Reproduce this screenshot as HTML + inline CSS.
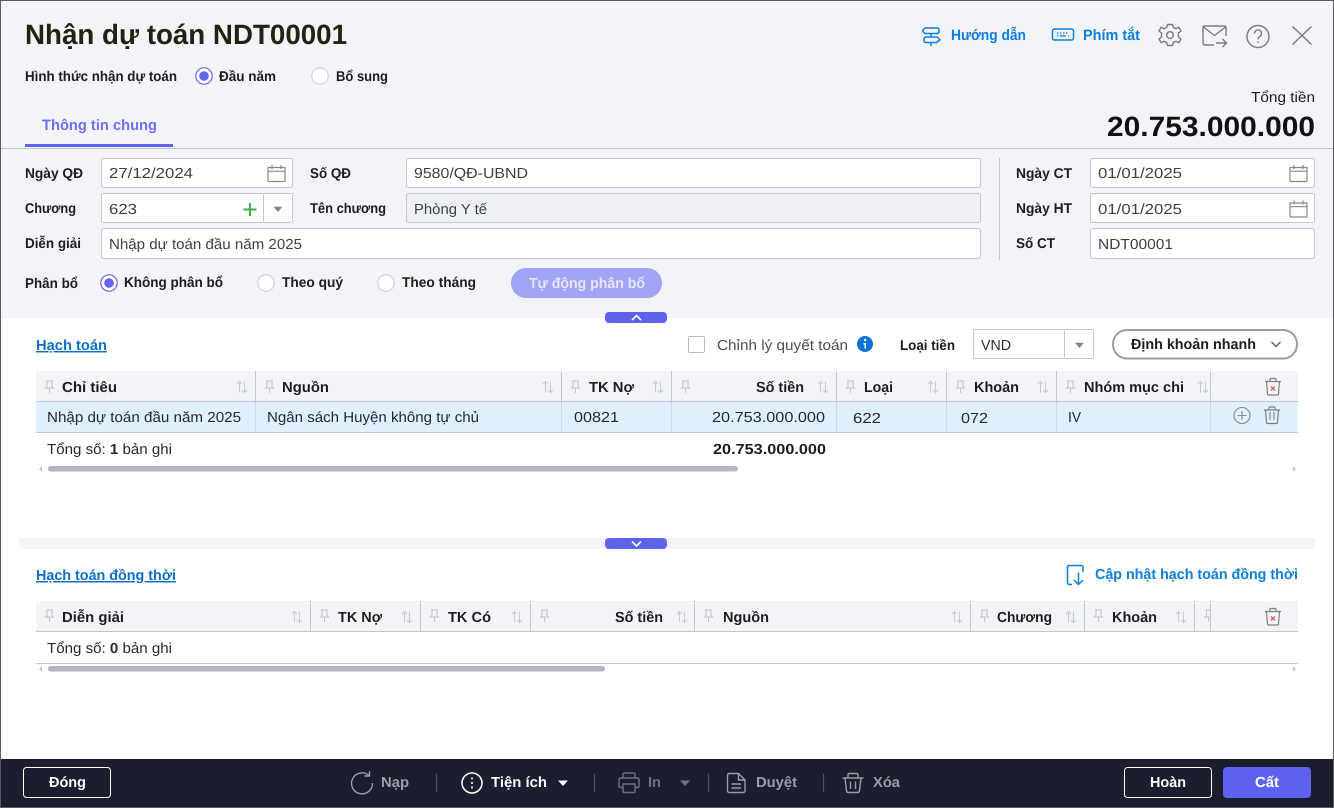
<!DOCTYPE html>
<html lang="vi"><head><meta charset="utf-8"><title>Nhận dự toán NDT00001</title>
<style>
html,body{margin:0;padding:0;background:#fff;width:1334px;height:808px;overflow:hidden}
svg{display:block}
text{font-family:"Liberation Sans",sans-serif;font-size:14.6px;fill:#26282e}
.b{font-weight:700;fill:#1c1d22}
.lb{font-size:14.2px}
.v{fill:#3c3f47}
.inp{fill:#fff;stroke:#c5c7d0}
.ln{stroke:#c4c6cf;fill:none}
.ic{fill:none;stroke:#7a7c80;stroke-width:1.4}
.blue{fill:none;stroke:#0d7fdc;stroke-width:1.5}
.ft{fill:none;stroke:#9a9da6;stroke-width:1.4}
.gr{fill:#9a9da6;font-weight:700}
</style></head><body>
<svg width="1334" height="808" viewBox="0 0 1334 808" xmlns="http://www.w3.org/2000/svg" text-rendering="geometricPrecision">
<defs>
<g id="pin"><path d="M-3.500-6H3.500M-2.500-6V-.5L-4 1H4L2.500-.5V-6M0 1V6" fill="none" stroke="#c3c5cc" stroke-width="1"/></g>
<g id="sort"><path d="M-2.500 5.500V-5.500M-5-3L-2.500-5.500L0-3M2.500-5.500V5.500M0 3L2.500 5.500L5 3" fill="none" stroke="#c8cad1" stroke-width="1"/></g>
<g id="cal"><path d="M-8.500-5.500H8.500V7.500Q8.500 8.500 7.500 8.500H-7.500Q-8.500 8.500-8.500 7.500ZM-8.500-1.800H8.500M-4.500-8V-4M4.500-8V-4" fill="none" stroke="#85878c" stroke-width="1.200"/></g>
<g id="rx"><circle r="8.200" fill="#fff" stroke="#c8cad2" stroke-width="1"/></g>
<g id="ron"><circle r="8.200" fill="#fff" stroke="#6466f1" stroke-width="1.200"/><circle r="4.800" fill="#6466f1"/></g>
<g id="trash"><path d="M-8-5.500H8M-3-5.500V-7.500Q-3-8.500-2-8.500H2Q3-8.500 3-7.500V-5.500M-6.500-5.500L-5.500 7Q-5.400 8-4.500 8H4.500Q5.400 8 5.500 7L6.500-5.500" fill="none" stroke="#7d7f86" stroke-width="1.200"/></g>
<g id="caret"><path d="M-4.500-2.200H4.500L0 3Z" fill="#82848b"/></g>
</defs>

<!-- background -->
<rect width="1334" height="808" fill="#fff"/>
<rect x="0" y="0" width="1334" height="318" fill="#f3f4f9"/>

<!-- title -->
<text x="25" y="44" class="b" style="font-size:28px;fill:#222210" textLength="322" lengthAdjust="spacingAndGlyphs">Nhận dự toán NDT00001</text>
<text x="25" y="81" class="b lb" textLength="152" lengthAdjust="spacingAndGlyphs">Hình thức nhận dự toán</text>
<use href="#ron" x="204" y="76"/>
<text x="219" y="81" class="b lb" textLength="57" lengthAdjust="spacingAndGlyphs">Đầu năm</text>
<use href="#rx" x="320" y="76"/>
<text x="336" y="81" class="b lb" textLength="52" lengthAdjust="spacingAndGlyphs">Bổ sung</text>

<!-- top right tools -->
<path class="blue" d="M931 27V28M931 33.500V37M931 42.500V46M925 28H937Q939 28 939 30V31.500Q939 33.500 937 33.500H925L922.500 30.700ZM926 37H937L940 39.700L937 42.500H926Q924 42.500 924 40.500V39Q924 37 926 37Z"/>
<text x="951" y="40" style="font-size:15px;fill:#0d7fdc;font-weight:700" textLength="75" lengthAdjust="spacingAndGlyphs">Hướng dẫn</text>
<rect x="1052.500" y="29" width="21" height="11" rx="2" class="blue"/>
<path d="M1057 33h1.500M1060 33h1.500M1063 33h1.500M1066 33h1.500M1057 36h1.500M1060 36h6M1068 36h1" stroke="#0d7fdc" stroke-width="1.200"/>
<text x="1083" y="40" style="font-size:15px;fill:#0d7fdc;font-weight:700" textLength="57" lengthAdjust="spacingAndGlyphs">Phím tắt</text>
<g transform="translate(1170 35)"><circle r="3.300" class="ic"/><path class="ic" stroke-linejoin="round" d="M-2.500-10.500H2.500L3.300-7.500L6-6.300L8.800-7.800L11-4L8.500-2V2L11 4L8.800 7.800L6 6.300L3.300 7.500L2.500 10.500H-2.500L-3.300 7.500L-6 6.300L-8.800 7.800L-11 4L-8.500 2V-2L-11-4L-8.800-7.800L-6-6.300L-3.300-7.500Z"/></g>
<path class="ic" d="M1214 45H1205Q1203 45 1203 43V27.500Q1203 26 1205 26H1224Q1226 26 1226 27.500V36M1203.500 27L1214.500 35.500L1225.500 27M1216 43H1226.500M1222.500 39L1226.500 43L1222.500 47"/>
<circle cx="1258" cy="36.500" r="11" class="ic"/>
<path class="ic" d="M1254.500 33.500A3.500 3.500 0 1 1 1260 36.300C1258.800 37.100 1258 37.800 1258 39.500M1258 41.300V42.800"/>
<path d="M1292.500 26.500L1311.500 44.500M1311.500 26.500L1292.500 44.500" fill="none" stroke="#7a7c80" stroke-width="1.500"/>

<!-- total -->
<text x="1251" y="102" style="font-size:14.500px;fill:#1c1d22" textLength="64" lengthAdjust="spacingAndGlyphs">Tổng tiền</text>
<text x="1107" y="136" class="b" style="font-size:28px;fill:#111" textLength="208" lengthAdjust="spacingAndGlyphs">20.753.000.000</text>

<!-- tab -->
<text x="42" y="130" style="font-size:15px;font-weight:700;fill:#6f70ef" textLength="115" lengthAdjust="spacingAndGlyphs">Thông tin chung</text>
<rect x="0" y="148" width="1334" height="1" fill="#c4c6cf"/>
<rect x="25" y="144" width="148" height="3" fill="#5f62ee"/>

<!-- form -->
<text x="25" y="178" class="b lb" textLength="58" lengthAdjust="spacingAndGlyphs">Ngày QĐ</text>
<rect x="101.500" y="158.500" width="191" height="29" rx="2" class="inp"/>
<text x="109" y="178" class="v" textLength="84" lengthAdjust="spacingAndGlyphs">27/12/2024</text>
<use href="#cal" x="276.500" y="173"/>

<text x="25" y="213" class="b lb" textLength="51" lengthAdjust="spacingAndGlyphs">Chương</text>
<rect x="101.500" y="193.500" width="191" height="29" rx="2" class="inp"/>
<text x="109" y="214" class="v" textLength="28" lengthAdjust="spacingAndGlyphs">623</text>
<path d="M250 203V216M243.500 209.500H256.500" stroke="#38b449" stroke-width="2" fill="none"/>
<path d="M263.500 194V222" stroke="#c5c7d0"/>
<use href="#caret" x="278" y="209"/>

<text x="25" y="248" class="b lb" textLength="56" lengthAdjust="spacingAndGlyphs">Diễn giải</text>
<rect x="101.500" y="228.500" width="879" height="30" rx="2" class="inp"/>
<text x="109" y="249" class="v" textLength="193" lengthAdjust="spacingAndGlyphs">Nhập dự toán đầu năm 2025</text>

<text x="310" y="178" class="b lb" textLength="41" lengthAdjust="spacingAndGlyphs">Số QĐ</text>
<rect x="406.500" y="158.500" width="574" height="29" rx="2" class="inp"/>
<text x="414" y="178" class="v" textLength="114" lengthAdjust="spacingAndGlyphs">9580/QĐ-UBND</text>
<text x="310" y="213" class="b lb" textLength="76" lengthAdjust="spacingAndGlyphs">Tên chương</text>
<rect x="406.500" y="193.500" width="574" height="29" rx="2" fill="#eff0f4" stroke="#c5c7d0"/>
<text x="414" y="214" class="v" textLength="73" lengthAdjust="spacingAndGlyphs">Phòng Y tế</text>

<path d="M999.500 158V260" stroke="#c4c6cf"/>

<text x="1016" y="178" class="b lb" textLength="56" lengthAdjust="spacingAndGlyphs">Ngày CT</text>
<rect x="1090.500" y="158.500" width="224" height="29" rx="2" class="inp"/>
<text x="1098" y="178" class="v" textLength="84" lengthAdjust="spacingAndGlyphs">01/01/2025</text>
<use href="#cal" x="1298.500" y="173"/>
<text x="1016" y="213" class="b lb" textLength="56" lengthAdjust="spacingAndGlyphs">Ngày HT</text>
<rect x="1090.500" y="193.500" width="224" height="29" rx="2" class="inp"/>
<text x="1098" y="214" class="v" textLength="84" lengthAdjust="spacingAndGlyphs">01/01/2025</text>
<use href="#cal" x="1298.500" y="208.500"/>
<text x="1016" y="248" class="b lb" textLength="39" lengthAdjust="spacingAndGlyphs">Số CT</text>
<rect x="1090.500" y="228.500" width="224" height="30" rx="2" class="inp"/>
<text x="1098" y="249" class="v" textLength="75" lengthAdjust="spacingAndGlyphs">NDT00001</text>

<text x="25" y="288" class="b lb" textLength="53" lengthAdjust="spacingAndGlyphs">Phân bổ</text>
<use href="#ron" x="109" y="283"/>
<text x="124" y="287" class="b lb" textLength="99" lengthAdjust="spacingAndGlyphs">Không phân bổ</text>
<use href="#rx" x="266" y="283"/>
<text x="282" y="287" class="b lb" textLength="61" lengthAdjust="spacingAndGlyphs">Theo quý</text>
<use href="#rx" x="386" y="283"/>
<text x="402" y="287" class="b lb" textLength="74" lengthAdjust="spacingAndGlyphs">Theo tháng</text>
<rect x="511" y="268" width="151" height="30" rx="15" fill="#a1a3f4"/>
<text x="529" y="288" style="font-size:14.600px;font-weight:700;fill:#e6e7fb" textLength="116" lengthAdjust="spacingAndGlyphs">Tự động phân bổ</text>

<!-- upper handle -->
<rect x="605" y="312" width="62" height="11" rx="4" fill="#5f62ea"/>
<path d="M632 320L636.500 315.500L641 320" fill="none" stroke="#fff" stroke-width="1.600"/>

<!-- toolbar 1 -->
<text x="36" y="350" style="font-size:14.600px;font-weight:700;fill:#0f6fc6;text-decoration:underline" textLength="71" lengthAdjust="spacingAndGlyphs">Hạch toán</text>
<rect x="688.500" y="336.500" width="16" height="16" rx="1.500" fill="#fff" stroke="#b8bbd0"/>
<text x="717" y="350" style="fill:#4a4d57" textLength="131" lengthAdjust="spacingAndGlyphs">Chỉnh lý quyết toán</text>
<circle cx="865" cy="344" r="8" fill="#0b74d1"/>
<path d="M864 341h2v-2h-2zM863.500 343H866V348.500H864.500V344.500H863.500Z" fill="#fff"/>
<text x="900" y="350" class="b lb" textLength="55" lengthAdjust="spacingAndGlyphs">Loại tiền</text>
<rect x="973.500" y="329.500" width="120" height="29" rx="2" class="inp"/>
<path d="M1064.500 330V358" stroke="#c5c7d0"/>
<text x="981" y="350" style="fill:#2b2d33" textLength="30" lengthAdjust="spacingAndGlyphs">VND</text>
<use href="#caret" x="1079.500" y="345"/>
<rect x="1113" y="330" width="184" height="28.500" rx="14" fill="#fff" stroke="#9a9bab" stroke-width="2"/>
<text x="1131" y="349" class="b" textLength="125" lengthAdjust="spacingAndGlyphs">Định khoản nhanh</text>
<path d="M1271.500 342L1276 346.500L1280.500 342" fill="none" stroke="#55575e" stroke-width="1.300"/>

<!-- table 1 -->
<rect x="36" y="371" width="1262" height="30" fill="#f3f4f8"/>
<rect x="36" y="402" width="1262" height="30" fill="#e0f0fe"/>
<path class="ln" d="M36 401.500H1298M36 432.500H1298"/>
<path class="ln" d="M255.500 371V401M561.500 371V401M671.500 371V401M836.500 371V401M946.500 371V401M1056.500 371V401M1210.500 371V401"/>
<path class="ln" stroke-dasharray="1 1" d="M255.500 402V432M561.500 402V432M671.500 402V432M836.500 402V432M946.500 402V432M1056.500 402V432M1210.500 402V432"/>
<use href="#pin" x="49.500" y="387"/><use href="#pin" x="269.500" y="387"/><use href="#pin" x="575.500" y="387"/><use href="#pin" x="685.500" y="387"/><use href="#pin" x="850.500" y="387"/><use href="#pin" x="960.500" y="387"/><use href="#pin" x="1070.500" y="387"/>
<use href="#sort" x="242" y="387"/><use href="#sort" x="548" y="387"/><use href="#sort" x="658" y="387"/><use href="#sort" x="823" y="387"/><use href="#sort" x="933" y="387"/><use href="#sort" x="1043" y="387"/><use href="#sort" x="1203" y="387"/>
<text x="62" y="392" class="b" textLength="55" lengthAdjust="spacingAndGlyphs">Chỉ tiêu</text>
<text x="282" y="392" class="b" textLength="47" lengthAdjust="spacingAndGlyphs">Nguồn</text>
<text x="589" y="392" class="b" textLength="45" lengthAdjust="spacingAndGlyphs">TK Nợ</text>
<text x="756" y="392" class="b" textLength="48" lengthAdjust="spacingAndGlyphs">Số tiền</text>
<text x="864" y="392" class="b" textLength="29" lengthAdjust="spacingAndGlyphs">Loại</text>
<text x="974" y="392" class="b" textLength="45" lengthAdjust="spacingAndGlyphs">Khoản</text>
<text x="1084" y="392" class="b" textLength="100" lengthAdjust="spacingAndGlyphs">Nhóm mục chi</text>
<use href="#trash" x="1273" y="387"/>
<path d="M1271 386.500L1275 390.500M1275 386.500L1271 390.500" stroke="#ee5a5a" stroke-width="1.300"/>

<text x="47" y="422" textLength="194" lengthAdjust="spacingAndGlyphs">Nhập dự toán đầu năm 2025</text>
<text x="267" y="422" textLength="212" lengthAdjust="spacingAndGlyphs">Ngân sách Huyện không tự chủ</text>
<text x="574" y="422" textLength="45" lengthAdjust="spacingAndGlyphs">00821</text>
<text x="712" y="422" textLength="113" lengthAdjust="spacingAndGlyphs">20.753.000.000</text>
<text x="853" y="423" textLength="28" lengthAdjust="spacingAndGlyphs">622</text>
<text x="961" y="423" textLength="27" lengthAdjust="spacingAndGlyphs">072</text>
<text x="1068" y="422" textLength="13" lengthAdjust="spacingAndGlyphs">IV</text>
<circle cx="1242" cy="415.500" r="8" fill="none" stroke="#85878c" stroke-width="1.100"/>
<path d="M1242 411V420M1237.500 415.500H1246.500" stroke="#85878c" stroke-width="1.100"/>
<use href="#trash" x="1272" y="415.500"/>
<path d="M1270 412V420M1274 412V420" stroke="#7d7f86" stroke-width="1.100"/>

<text x="47" y="454" textLength="125" lengthAdjust="spacingAndGlyphs">Tổng số: <tspan font-weight="700">1</tspan> bản ghi</text>
<text x="713" y="454" class="b" textLength="113" lengthAdjust="spacingAndGlyphs">20.753.000.000</text>
<rect x="48" y="466" width="690" height="5.500" rx="2.700" fill="#b3b7c0"/>
<path d="M42 466V472L39 469ZM1293 466V472L1296 469Z" fill="#c4c6cf"/>

<!-- splitter -->
<rect x="19" y="538" width="1296" height="11" fill="#f3f4f8"/>
<rect x="605" y="538" width="62" height="11" rx="4" fill="#5f62ea"/>
<path d="M632 541.500L636.500 546L641 541.500" fill="none" stroke="#fff" stroke-width="1.600"/>

<!-- toolbar 2 -->
<text x="36" y="580" style="font-size:14.600px;font-weight:700;fill:#0f6fc6;text-decoration:underline" textLength="140" lengthAdjust="spacingAndGlyphs">Hạch toán đồng thời</text>
<path class="blue" d="M1072 584.500H1069.500Q1067.500 584.500 1067.500 582.500V567.500Q1067.500 565.500 1069.500 565.500H1081Q1083 565.500 1083 567.500V572M1078.500 572.500V584M1074 580L1078.500 584.500L1083 580"/>
<text x="1095" y="579" style="font-size:14.600px;font-weight:700;fill:#0d7fdc" textLength="203" lengthAdjust="spacingAndGlyphs">Cập nhật hạch toán đồng thời</text>

<!-- table 2 -->
<rect x="36" y="601" width="1262" height="30" fill="#f3f4f8"/>
<path class="ln" d="M36 631.500H1298M36 663.500H1298"/>
<path class="ln" d="M310.500 601V631M420.500 601V631M530.500 601V631M694.500 601V631M970.500 601V631M1084.500 601V631M1194.500 601V631M1210.500 601V631"/>
<use href="#pin" x="49.500" y="616"/><use href="#pin" x="324.500" y="616"/><use href="#pin" x="434.500" y="616"/><use href="#pin" x="544.500" y="616"/><use href="#pin" x="708.500" y="616"/><use href="#pin" x="984.500" y="616"/><use href="#pin" x="1098.500" y="616"/>
<path d="M1205.500 610H1210M1206.500 610V615.500L1205 617H1210M1208.500 617V622" fill="none" stroke="#c3c5cc"/>
<use href="#sort" x="297" y="617"/><use href="#sort" x="407" y="617"/><use href="#sort" x="517" y="617"/><use href="#sort" x="682" y="617"/><use href="#sort" x="957" y="617"/><use href="#sort" x="1071" y="617"/><use href="#sort" x="1181" y="617"/>
<text x="62" y="622" class="b" textLength="62" lengthAdjust="spacingAndGlyphs">Diễn giải</text>
<text x="338" y="622" class="b" textLength="44" lengthAdjust="spacingAndGlyphs">TK Nợ</text>
<text x="448" y="622" class="b" textLength="43" lengthAdjust="spacingAndGlyphs">TK Có</text>
<text x="615" y="622" class="b" textLength="48" lengthAdjust="spacingAndGlyphs">Số tiền</text>
<text x="723" y="622" class="b" textLength="46" lengthAdjust="spacingAndGlyphs">Nguồn</text>
<text x="997" y="622" class="b" textLength="55" lengthAdjust="spacingAndGlyphs">Chương</text>
<text x="1112" y="622" class="b" textLength="45" lengthAdjust="spacingAndGlyphs">Khoản</text>
<use href="#trash" x="1273" y="617"/>
<path d="M1271 616.500L1275 620.500M1275 616.500L1271 620.500" stroke="#ee5a5a" stroke-width="1.300"/>
<text x="47" y="653" textLength="125" lengthAdjust="spacingAndGlyphs">Tổng số: <tspan font-weight="700">0</tspan> bản ghi</text>
<rect x="48" y="666" width="557" height="5.500" rx="2.700" fill="#b3b7c0"/>
<path d="M42 666V672L39 669ZM1293 666V672L1296 669Z" fill="#c4c6cf"/>

<!-- footer -->
<rect x="0" y="759" width="1334" height="49" fill="#1a1e2e"/>
<rect x="23.500" y="767.500" width="87" height="30" rx="3" fill="none" stroke="#fff"/>
<text x="49" y="787" style="font-size:14.600px;font-weight:700;fill:#fff" textLength="37" lengthAdjust="spacingAndGlyphs">Đóng</text>

<path class="ft" d="M369 775.500A10.500 10.500 0 1 0 372.500 783M369.500 771V776H364.500" stroke-width="1.300"/>
<text x="381" y="787" class="gr" textLength="28" lengthAdjust="spacingAndGlyphs">Nạp</text>
<path d="M436.500 774V792M594.500 774V792M708.500 774V792M823.500 774V792" stroke="#50535f" stroke-width="1.200"/>
<circle cx="472" cy="783" r="10" fill="none" stroke="#fff" stroke-width="1.500"/>
<path d="M472 777.500V779.500M472 782V784M472 786.500V788.500" stroke="#fff" stroke-width="1.600"/>
<text x="491" y="787" style="font-size:14.600px;font-weight:700;fill:#fff" textLength="56" lengthAdjust="spacingAndGlyphs">Tiện ích</text>
<path d="M558 780.500H568L563 786Z" fill="#fff"/>
<path d="M623 778V774.500Q623 773 624.500 773H633.500Q635 773 635 774.500V778M623 787.500H620.500Q619 787.500 619 786V780Q619 778 621 778H637Q639 778 639 780V786Q639 787.500 637.500 787.500H635M623 784H635V791.500Q635 792.500 634 792.500H624Q623 792.500 623 791.500Z" fill="none" stroke="#6f727d" stroke-width="1.400"/>
<text x="648" y="787" style="font-size:14.600px;font-weight:700;fill:#6f727d" textLength="13" lengthAdjust="spacingAndGlyphs">In</text>
<path d="M680 780.500H690L685 786Z" fill="#6f727d"/>
<path class="ft" d="M738.500 773.500H729.500Q727.500 773.500 727.500 775.500V790.500Q727.500 792.500 729.500 792.500H743Q745 792.500 745 790.500V780ZM738.500 773.500V780H745M731.500 784H741M731.500 788H741"/>
<text x="756" y="787" class="gr" textLength="41" lengthAdjust="spacingAndGlyphs">Duyệt</text>
<path class="ft" d="M842.500 778H863.500M848 778V775Q848 773.500 849.500 773.500H856.500Q858 773.500 858 775V778M845 778L846.500 790.500Q846.700 792.500 848.500 792.500H857.500Q859.300 792.500 859.500 790.500L861 778M850.500 781.500V789M855.500 781.500V789"/>
<text x="873" y="787" class="gr" textLength="27" lengthAdjust="spacingAndGlyphs">Xóa</text>

<rect x="1124.500" y="767.500" width="87" height="30" rx="3" fill="none" stroke="#fff"/>
<text x="1150" y="787" style="font-size:14.600px;font-weight:700;fill:#fff" textLength="36" lengthAdjust="spacingAndGlyphs">Hoàn</text>
<rect x="1223" y="767" width="88" height="31" rx="4" fill="#5f62ee"/>
<text x="1255" y="787" style="font-size:14.600px;font-weight:700;fill:#fff" textLength="24" lengthAdjust="spacingAndGlyphs">Cất</text>

<!-- window border -->
<rect x="0.500" y="0.500" width="1333" height="807" fill="none" stroke="#5a5a5e"/>
</svg>
</body></html>
